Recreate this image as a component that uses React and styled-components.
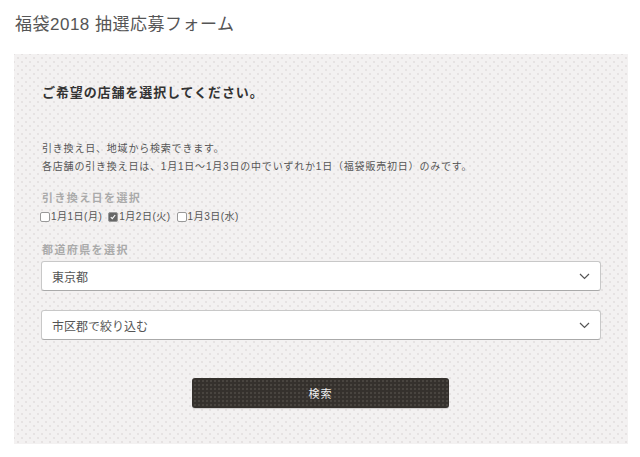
import React from "react";
import styled, { createGlobalStyle } from "styled-components";

const GlobalStyle = createGlobalStyle`
  html, body {
    margin: 0;
    padding: 0;
    background: #fff;
    font-family: "Liberation Sans", "Noto Sans CJK JP", sans-serif;
    color: #555;
  }
`;

const Page = styled.div`
  width: 640px;
  padding: 14px 12px 13px 14px;
  box-sizing: border-box;
`;

const Title = styled.h1`
  margin: 0 0 18px 1px;
  font-size: 17px;
  font-weight: normal;
  line-height: 22px;
  color: #555;
  letter-spacing: 0.5px;
`;

const Panel = styled.section`
  width: 614px;
  height: 390px;
  box-sizing: border-box;
  padding: 30px 27px 0 28px;
  background-color: #f3f1f1;
  background-image: radial-gradient(circle, #dedada 0.6px, transparent 0.9px),
    radial-gradient(circle, #dedada 0.6px, transparent 0.9px);
  background-size: 8px 8px;
  background-position: 0 0, 4px 4px;
`;

const Heading = styled.h2`
  margin: 0 0 38px;
  font-size: 13px;
  font-weight: bold;
  line-height: 18px;
  color: #333;
  letter-spacing: 0.9px;
`;

const Note = styled.p`
  margin: 0;
  font-size: 10px;
  line-height: 18px;
  color: #555;
  letter-spacing: 0.8px;
`;

const Group = styled.div`
  margin-top: ${p => p.$top}px;
`;

const Label = styled.div`
  font-size: 11px;
  font-weight: bold;
  line-height: 16px;
  color: #aaa;
  letter-spacing: 1.4px;
  margin-bottom: 3px;
`;

const Checks = styled.div`
  display: flex;
  gap: 6px;
  margin-left: -2px;
  font-size: 10px;
  line-height: 16px;
  color: #555;
  letter-spacing: 0.5px;
`;

const CheckItem = styled.label`
  display: flex;
  align-items: center;
`;

const Box = styled.span`
  width: 8px;
  height: 8px;
  border: 1px solid #999;
  border-radius: 2px;
  background: ${p => (p.$checked ? "#666" : "#fff")};
  display: flex;
  align-items: center;
  justify-content: center;
  margin-right: 1px;
`;

const Select = styled.div`
  width: 560px;
  height: 30px;
  box-sizing: border-box;
  margin-left: -1px;
  padding: 0 10px;
  display: flex;
  align-items: center;
  justify-content: space-between;
  background: #fff;
  border: 1px solid #c8c8c8;
  border-bottom-color: #aaa;
  border-radius: 3px;
  font-size: 12px;
  color: #555;
  margin-top: ${p => p.$top || 0}px;
`;

const ButtonRow = styled.div`
  display: flex;
  justify-content: center;
  margin-top: 38px;
  padding-right: 2px;
`;

const Button = styled.button`
  width: 257px;
  height: 30px;
  border: none;
  border-radius: 3px;
  background-color: #35312d;
  background-image: radial-gradient(circle, #5f5a54 0.5px, transparent 0.9px);
  background-size: 4px 4px;
  background-position: 1px 1px;
  color: #eee;
  font-family: inherit;
  font-size: 11px;
  letter-spacing: 1px;
  box-shadow: 0 1px 1px rgba(0, 0, 0, 0.15);
`;

const Chevron = () => (
  <svg width="11" height="7" viewBox="0 0 11 7">
    <path d="M1 1l4.5 4.5L10 1" fill="none" stroke="#555" strokeWidth="1.2" />
  </svg>
);

const Check = ({ checked, children }) => (
  <CheckItem>
    <Box $checked={checked}>
      {checked && (
        <svg width="6" height="6" viewBox="0 0 6 6">
          <path d="M0.8 3.2l1.5 1.5L5.2 1" fill="none" stroke="#fff" strokeWidth="1.1" />
        </svg>
      )}
    </Box>
    {children}
  </CheckItem>
);

export default function App() {
  return (
    <Page>
      <GlobalStyle />
      <Title>福袋2018 抽選応募フォーム</Title>
      <Panel>
        <Heading>ご希望の店舗を選択してください。</Heading>
        <Note>引き換え日、地域から検索できます。</Note>
        <Note>各店舗の引き換え日は、1月1日〜1月3日の中でいずれか1日（福袋販売初日）のみです。</Note>
        <Group $top={14}>
          <Label>引き換え日を選択</Label>
          <Checks>
            <Check>1月1日(月)</Check>
            <Check checked>1月2日(火)</Check>
            <Check>1月3日(水)</Check>
          </Checks>
        </Group>
        <Group $top={17}>
          <Label>都道府県を選択</Label>
          <Select>
            <span>東京都</span>
            <Chevron />
          </Select>
          <Select $top={19}>
            <span>市区郡で絞り込む</span>
            <Chevron />
          </Select>
        </Group>
        <ButtonRow>
          <Button>検索</Button>
        </ButtonRow>
      </Panel>
    </Page>
  );
}
